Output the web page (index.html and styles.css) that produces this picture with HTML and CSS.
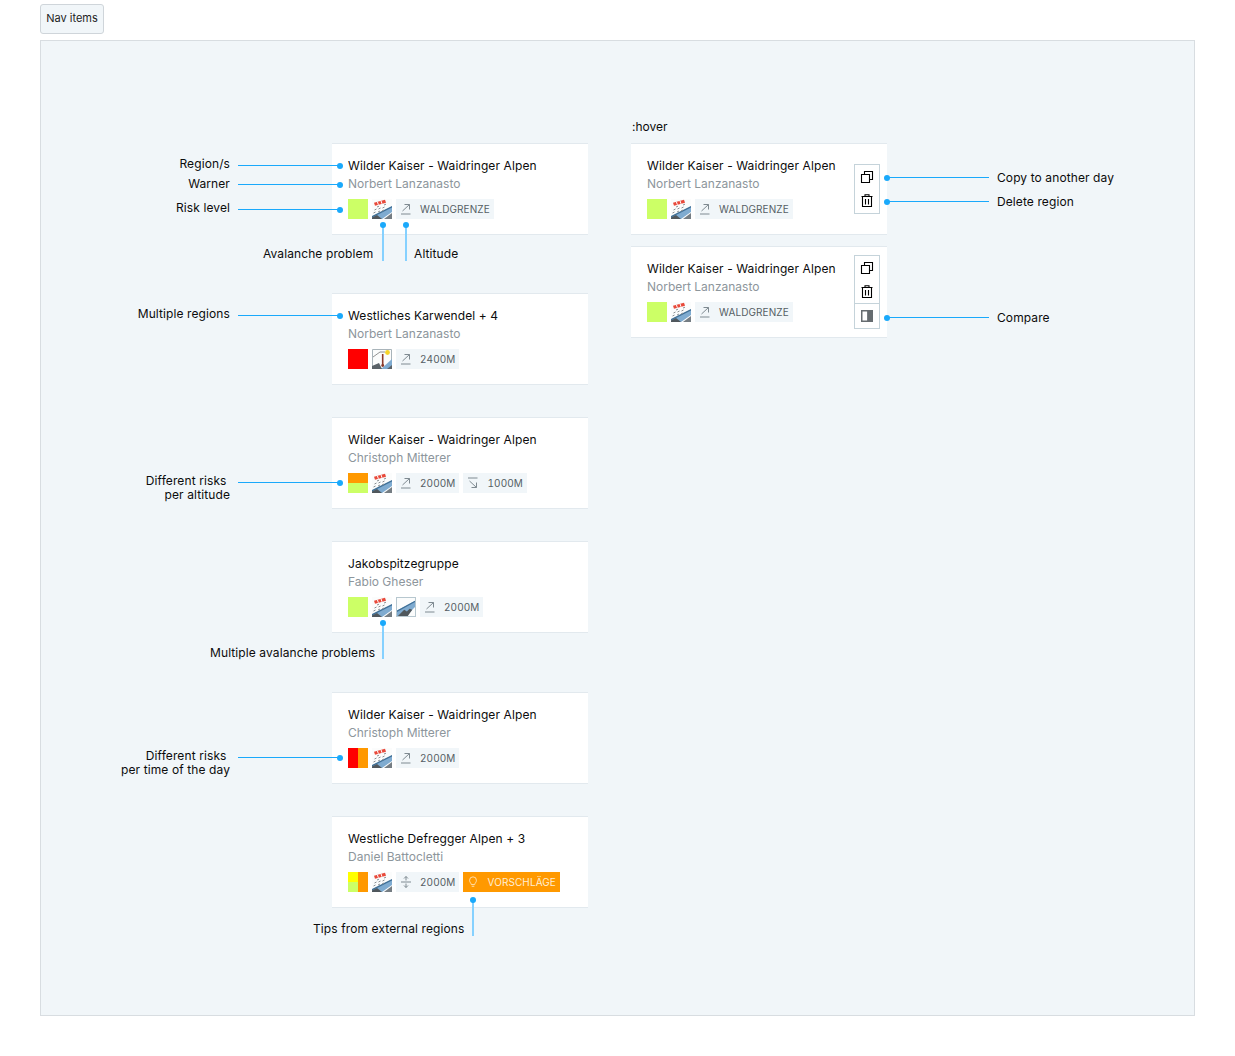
FILE: index.html
```html
<!DOCTYPE html>
<html lang="en">
<head>
<meta charset="utf-8">
<title>Nav items</title>
<link rel="stylesheet" href="styles.css">
</head>
<body>
<svg class="defs" width="0" height="0" aria-hidden="true">
  <symbol id="ava" viewBox="0 0 20 20">
    <rect width="20" height="20" fill="#fbfcfc"/>
    <path d="M0 20 V17.5 L20 7.5 V13 L10 20Z" fill="#7fabd0"/>
    <path d="M0 17 L20 7 V8.4 L0 18.4Z" fill="#3f6f96"/>
    <path d="M0 20 V18.4 L5 16 L10 20Z" fill="#50575c"/>
    <path d="M12 20 L20 14 V20Z" fill="#757d83"/>
    <path d="M2 3.8 L13 .8 L14 3.8 L3 6.8Z" fill="#e8493a"/>
    <path d="M5.4 2.8 L6.4 5.8 M9 1.8 L10 4.8" stroke="#fff" stroke-width="1"/>
    <path d="M2.5 11 L4.5 10 M6.5 10 L8.5 9 M10.5 9 L12.5 8 M6 13 L8 12 M10 12 L12 11 M1.5 14 L3.5 13 M12 6 L14 5.2 M5 8 L7 7.2" stroke="#8a8f93" stroke-width="1" fill="none"/>
  </symbol>
  <symbol id="ava-gliding" viewBox="0 0 20 20">
    <rect width="20" height="20" fill="#fbfcfc"/>
    <path d="M0 20 V14 L20 3 V10 L10 20Z" fill="#7fabd0"/>
    <path d="M0 14 L20 3 V4.5 L0 15.5Z" fill="#3f6f96"/>
    <path d="M1 20 L8 13 L11 15 L14 12 L17 13 L12 20Z" fill="#50575c"/>
  </symbol>
  <symbol id="ava-wet" viewBox="0 0 20 20">
    <rect width="20" height="20" fill="#fbfcfc"/>
    <path d="M.5 .5 H19.5 V19.5 H.5Z" fill="none" stroke="#a9b4ba"/>
    <path d="M9 20 L20 10 V20Z" fill="#7fabd0"/>
    <path d="M0 20 V17 L7 14 L10 20Z M15 20 L20 16 V20Z" fill="#5a6268"/>
    <circle cx="15.5" cy="3.5" r="2.4" fill="#f5d328"/>
    <path d="M1 8 L8 3 H13" fill="none" stroke="#777" stroke-width=".8"/>
    <path d="M10.7 5 V16" stroke="#8a3a2a" stroke-width="1.6"/>
    <circle cx="10.7" cy="16.5" r="1.4" fill="#8a3a2a"/>
  </symbol>
  <symbol id="above" viewBox="0 0 12 12">
    <path d="M2.5 8 L9.5 1.5 M4.5 1.5 H9.5 V6.5 M1 11 H10.5" fill="none" stroke="#7f8a91" stroke-width="1"/>
  </symbol>
  <symbol id="below" viewBox="0 0 12 12">
    <path d="M2.5 4 L9.5 10.5 M4.5 10.5 H9.5 V5.5 M1 1 H10.5" fill="none" stroke="#7f8a91" stroke-width="1"/>
  </symbol>
  <symbol id="middle" viewBox="0 0 12 12">
    <path d="M6 .5 V4.5 M4 2.5 L6 .5 L8 2.5 M6 11.5 V7.5 M4 9.5 L6 11.5 L8 9.5 M1 6 H11" fill="none" stroke="#7f8a91" stroke-width="1"/>
  </symbol>
  <symbol id="bulb" viewBox="0 0 12 14">
    <path d="M4 10 C4 8.5 2 7.5 2 5 A4 4 0 0 1 10 5 C10 7.5 8 8.5 8 10Z M4.5 12 H7.5" fill="none" stroke="#ffe9c4" stroke-width="1"/>
  </symbol>
  <symbol id="copy" viewBox="0 0 14 14">
    <path d="M1.5 4.5 H9.5 V12.5 H1.5Z M4.5 4.5 V1.5 H12.5 V9.5 H9.5" fill="none" stroke="#000" stroke-width="1.1"/>
  </symbol>
  <symbol id="trash" viewBox="0 0 14 14">
    <path d="M1.5 2.5 H12.5 M5 2.5 V.8 H9 V2.5 M2.5 2.5 V12.5 H11.5 V2.5 M5.5 5 V10.5 M8.5 5 V10.5" fill="none" stroke="#000" stroke-width="1.1"/>
  </symbol>
  <symbol id="compare" viewBox="0 0 12 12">
    <path d="M.75 .75 H7 V11.25 H.75Z" fill="#fff" stroke="#666c70" stroke-width="1.5"/>
    <path d="M6.5 0 H12 V12 H6.5Z" fill="#666c70"/>
  </symbol>
</svg>

<button class="nav-button" type="button">Nav items</button>

<main class="canvas">
  <p class="hover-label">:hover</p>

  <article class="card c1">
    <h3 class="card-title">Wilder Kaiser - Waidringer Alpen</h3>
    <p class="card-warner">Norbert Lanzanasto</p>
    <div class="card-row">
      <span class="flag lime"></span>
      <svg class="ava"><use href="#ava"/></svg>
      <span class="tag"><svg class="tag-icon"><use href="#above"/></svg>Waldgrenze</span>
    </div>
  </article>

  <article class="card c2">
    <h3 class="card-title">Westliches Karwendel + 4</h3>
    <p class="card-warner">Norbert Lanzanasto</p>
    <div class="card-row">
      <span class="flag red"></span>
      <svg class="ava"><use href="#ava-wet"/></svg>
      <span class="tag"><svg class="tag-icon"><use href="#above"/></svg>2400m</span>
    </div>
  </article>

  <article class="card c3">
    <h3 class="card-title">Wilder Kaiser - Waidringer Alpen</h3>
    <p class="card-warner">Christoph Mitterer</p>
    <div class="card-row">
      <span class="flag split-alt"></span>
      <svg class="ava"><use href="#ava"/></svg>
      <span class="tag"><svg class="tag-icon"><use href="#above"/></svg>2000m</span>
      <span class="tag"><svg class="tag-icon"><use href="#below"/></svg>1000m</span>
    </div>
  </article>

  <article class="card c4">
    <h3 class="card-title">Jakobspitzegruppe</h3>
    <p class="card-warner">Fabio Gheser</p>
    <div class="card-row">
      <span class="flag lime"></span>
      <svg class="ava"><use href="#ava"/></svg>
      <svg class="ava ava-bordered"><use href="#ava-gliding"/></svg>
      <span class="tag"><svg class="tag-icon"><use href="#above"/></svg>2000m</span>
    </div>
  </article>

  <article class="card c5">
    <h3 class="card-title">Wilder Kaiser - Waidringer Alpen</h3>
    <p class="card-warner">Christoph Mitterer</p>
    <div class="card-row">
      <span class="flag split-time"></span>
      <svg class="ava"><use href="#ava"/></svg>
      <span class="tag"><svg class="tag-icon"><use href="#above"/></svg>2000m</span>
    </div>
  </article>

  <article class="card c6">
    <h3 class="card-title">Westliche Defregger Alpen + 3</h3>
    <p class="card-warner">Daniel Battocletti</p>
    <div class="card-row">
      <span class="flag split-both"><i class="flag-half"><b class="yellow"></b><b class="lime"></b></i><i class="flag-half orange"></i></span>
      <svg class="ava"><use href="#ava"/></svg>
      <span class="tag"><svg class="tag-icon"><use href="#middle"/></svg>2000m</span>
      <span class="tag tag-tip"><svg class="tag-icon"><use href="#bulb"/></svg>Vorschläge</span>
    </div>
  </article>

  <article class="card c7">
    <h3 class="card-title">Wilder Kaiser - Waidringer Alpen</h3>
    <p class="card-warner">Norbert Lanzanasto</p>
    <div class="card-row">
      <span class="flag lime"></span>
      <svg class="ava"><use href="#ava"/></svg>
      <span class="tag"><svg class="tag-icon"><use href="#above"/></svg>Waldgrenze</span>
    </div>
    <div class="actions actions-two">
      <button class="action" type="button"><svg class="action-icon"><use href="#copy"/></svg></button>
      <button class="action" type="button"><svg class="action-icon"><use href="#trash"/></svg></button>
    </div>
  </article>

  <article class="card c8">
    <h3 class="card-title">Wilder Kaiser - Waidringer Alpen</h3>
    <p class="card-warner">Norbert Lanzanasto</p>
    <div class="card-row">
      <span class="flag lime"></span>
      <svg class="ava"><use href="#ava"/></svg>
      <span class="tag"><svg class="tag-icon"><use href="#above"/></svg>Waldgrenze</span>
    </div>
    <div class="actions actions-three">
      <button class="action" type="button"><svg class="action-icon"><use href="#copy"/></svg></button>
      <button class="action" type="button"><svg class="action-icon"><use href="#trash"/></svg></button>
      <button class="action action-split" type="button"><svg class="action-icon icon-compare"><use href="#compare"/></svg></button>
    </div>
  </article>

  <span class="note n-region">Region/s</span>
  <span class="note n-warner">Warner</span>
  <span class="note n-risk">Risk level</span>
  <span class="note n-multi">Multiple regions</span>
  <span class="note n-alt">Different risks&nbsp;<br>per altitude</span>
  <span class="note n-time">Different risks&nbsp;<br>per time of the day</span>
  <span class="note-free n-problem">Avalanche problem</span>
  <span class="note-free n-altitude">Altitude</span>
  <span class="note-free n-multi-ava">Multiple avalanche problems</span>
  <span class="note-free n-tips">Tips from external regions</span>
  <span class="note-free n-copy">Copy to another day</span>
  <span class="note-free n-delete">Delete region</span>
  <span class="note-free n-compare">Compare</span>

  <i class="hline dot-end h1"></i>
  <i class="hline dot-end h2"></i>
  <i class="hline dot-end h3"></i>
  <i class="hline dot-end h4"></i>
  <i class="hline dot-end h5"></i>
  <i class="hline dot-end h6"></i>
  <i class="hline dot-start h7"></i>
  <i class="hline dot-start h8"></i>
  <i class="hline dot-start h9"></i>
  <i class="vline v1"></i>
  <i class="vline v2"></i>
  <i class="vline v3"></i>
  <i class="vline v4"></i>
</main>
</body>
</html>
```

FILE: styles.css
```css
* { box-sizing: border-box; }

html, body { margin: 0; padding: 0; background: #fff; }

body {
  font-family: Inter, "Liberation Sans", sans-serif;
  color: #111;
  height: 1056px;
  overflow: hidden;
}

.defs { position: absolute; }

.nav-button {
  display: block;
  margin: 4px 0 0 40px;
  width: 64px;
  height: 30px;
  padding: 0 0 2px;
  font: 11px Inter, "Liberation Sans", sans-serif;
  color: #222;
  background: #f1f6f9;
  border: 1px solid #cfd5da;
  border-radius: 3px;
}

.canvas {
  position: relative;
  margin: 6px 0 0 40px;
  width: 1155px;
  height: 976px;
  background: #f1f6f9;
  border: 1px solid #d8dde1;
}

.hover-label {
  position: absolute;
  left: 591px;
  top: 78px;
  margin: 0;
  font-size: 12px;
  line-height: 16px;
  color: #0c0c0c;
}

/* cards: nodes on the annotated diagram */
.card {
  position: absolute;
  width: 256px;
  height: 92px;
  padding: 13px 0 0 16px;
  background: #fff;
  border-top: 1px solid #e2e9ee;
  border-bottom: 1px solid #e2e9ee;
}

.c1 { left: 291px; top: 102px; }
.c2 { left: 291px; top: 252px; }
.c3 { left: 291px; top: 376px; }
.c4 { left: 291px; top: 500px; }
.c5 { left: 291px; top: 651px; }
.c6 { left: 291px; top: 775px; }
.c7 { left: 590px; top: 102px; }
.c8 { left: 590px; top: 205px; }

.card-title {
  margin: 0;
  font-size: 12px;
  font-weight: 400;
  line-height: 18px;
  letter-spacing: 0.1px;
  color: #0c0c0c;
}

.card-warner {
  margin: 0;
  font-size: 12px;
  line-height: 18px;
  color: #8d969c;
}

.card-row {
  display: flex;
  gap: 4px;
  margin-top: 6px;
  height: 20px;
}

.flag { display: block; width: 20px; height: 20px; flex: none; }
.lime { background: #ccff66; }
.red { background: #f00; }
.yellow { background: #ff0; }
.orange { background: #f90; }
.split-alt { background: linear-gradient(#f90 50%, #ccff66 50%); }
.split-time { background: linear-gradient(90deg, #f00 50%, #f90 50%); }
.split-both { display: flex; }
.flag-half { display: flex; flex-direction: column; width: 10px; height: 20px; }
.flag-half b { display: block; flex: 1; }

.ava { display: block; width: 20px; height: 20px; flex: none; }
.ava-bordered { border: 1px solid #b7c7cf; }

.tag {
  display: flex;
  align-items: center;
  gap: 8px;
  height: 20px;
  padding: 0 4px;
  background: #f1f6f9;
  font-size: 10px;
  line-height: 20px;
  letter-spacing: 0.1px;
  font-variant-numeric: tabular-nums;
  color: #555e64;
  text-transform: uppercase;
}

.tag-icon { display: block; width: 12px; height: 12px; flex: none; }

.tag-tip { background: #f90; color: #ffeed4; }

/* hover actions lie over the card */
.actions {
  position: absolute;
  right: 7px;
  display: flex;
  flex-direction: column;
  width: 26px;
  background: #fff;
  border: 1px solid #c5d3da;
}
.actions-two { top: 20px; height: 50px; }
.actions-three { top: 8px; height: 74px; }

.action {
  display: flex;
  align-items: center;
  justify-content: center;
  width: 24px;
  height: 24px;
  flex: none;
  padding: 0;
  background: none;
  border: 0;
}
.action-split { height: 25px; margin-top: -1px; border-top: 1px solid #c5d3da; }
.action-icon { display: block; width: 14px; height: 14px; }
.icon-compare { width: 12px; height: 12px; }

/* annotations */
.note, .note-free {
  position: absolute;
  font-size: 12px;
  line-height: 14px;
  letter-spacing: 0.1px;
  color: #0c0c0c;
  white-space: nowrap;
}

.note { right: 964px; text-align: right; }

.n-region { top: 116px; }
.n-warner { top: 136px; }
.n-risk { top: 160px; }
.n-multi { top: 266px; }
.n-alt { top: 433px; }
.n-time { top: 708px; }

.n-problem { left: 222px; top: 206px; }
.n-altitude { left: 373px; top: 206px; }
.n-multi-ava { left: 169px; top: 605px; }
.n-tips { left: 272px; top: 881px; }
.n-copy { left: 956px; top: 130px; }
.n-delete { left: 956px; top: 154px; }
.n-compare { left: 956px; top: 270px; }

.hline { position: absolute; display: block; height: 1px; width: 102px; background: #1aa9fb; }
.hline::after {
  content: "";
  position: absolute;
  top: -2px;
  width: 6px;
  height: 6px;
  border-radius: 50%;
  background: #1aa9fb;
}
.dot-end::after { right: -3px; }
.dot-start::after { left: -3px; }

.h1 { left: 197px; top: 124px; }
.h2 { left: 197px; top: 143px; }
.h3 { left: 197px; top: 168px; }
.h4 { left: 197px; top: 274px; }
.h5 { left: 197px; top: 441px; }
.h6 { left: 197px; top: 716px; }
.h7 { left: 846px; top: 136px; }
.h8 { left: 846px; top: 160px; }
.h9 { left: 846px; top: 276px; }

.vline { position: absolute; display: block; width: 2px; height: 36px; background: #86d1ff; }
.vline::before {
  content: "";
  position: absolute;
  top: -3px;
  left: -2px;
  width: 6px;
  height: 6px;
  border-radius: 50%;
  background: #1aa9fb;
}
.v1 { left: 341px; top: 184px; }
.v2 { left: 364px; top: 184px; }
.v3 { left: 341px; top: 582px; }
.v4 { left: 431px; top: 859px; }
```
